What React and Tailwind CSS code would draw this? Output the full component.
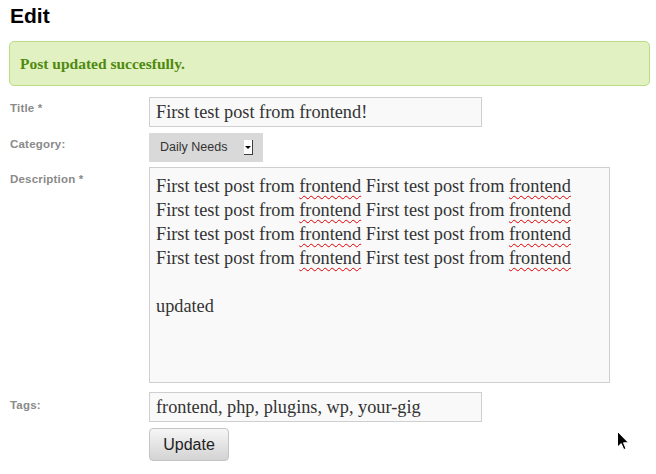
import React from 'react';

const serif = "font-['Liberation_Serif','Times_New_Roman',serif]";

const Misspelled = ({ children }) => (
  <span className="underline decoration-wavy decoration-[#e00000] decoration-1 underline-offset-[3px]">
    {children}
  </span>
);

const Label = ({ children, className = '' }) => (
  <div className={`pl-px text-[11.5px] font-bold leading-[16px] tracking-[0.2px] text-[#8a8a8a] ${className}`}>{children}</div>
);

const Line = () => (
  <div>
    First test post from <Misspelled>frontend</Misspelled> First test post from <Misspelled>frontend</Misspelled>
  </div>
);

const Cursor = () => (
  <svg className="absolute left-[617px] top-[431px]" width="13" height="20" viewBox="0 0 13 20">
    <path d="M0.5 0.5 L0.5 16 L4.2 12.6 L6.8 18.6 L9 17.6 L6.5 11.8 L11.5 11.8 Z" fill="#000" stroke="#fff" strokeWidth="1" />
  </svg>
);

const App = () => {
  return (
    <div className="relative min-h-[474px] bg-white pl-[9px] pr-[6px] font-['Liberation_Sans',Arial,sans-serif]">
      <h1 className="pl-px pt-[4px] text-[21px] font-bold leading-[24px] text-black">Edit</h1>

      <div className="mt-[13px] rounded-[5px] border border-[#b9dd84] bg-[#e1f1c1] px-[10px] pt-[12px] pb-[11px]">
        <p className={`${serif} text-[15.5px] font-bold leading-[20px] text-[#4f8a10]`}>Post updated succesfully.</p>
      </div>

      <div className="mt-[11px] grid grid-cols-[140px_1fr]">
        <Label className="pt-[3px]">Title *</Label>
        <div className={`${serif} h-[30px] w-[333px] border border-[#cfcfcf] bg-[#f9f9f9] pl-[6px] text-[18.3px] leading-[28px] text-[#333]`}>
          First test post from frontend!
        </div>

        <Label className="mt-[6px] pt-[3px]">Category:</Label>
        <div className="mt-[6px] flex h-[29px] w-[114px] items-center bg-[#d9d9d9] pl-[11px] pr-[10px] text-[12.5px] text-[#333]">
          <span>Daily Needs</span>
          <div className="ml-auto flex h-[15px] w-[9px] items-center justify-center border-r border-b border-[#404040] bg-white">
            <div className="h-0 w-0 border-x-[3px] border-t-[3px] border-x-transparent border-t-black" />
          </div>
        </div>

        <Label className="mt-[5px] pt-[4px]">Description *</Label>
        <div className={`${serif} mt-[5px] h-[216px] w-[461px] border border-[#cfcfcf] bg-[#f9f9f9] pl-[6px] pt-[6px] text-[18.3px] leading-[24px] text-[#333]`}>
          <Line />
          <Line />
          <Line />
          <Line />
          <div className="h-[24px]" />
          <div>updated</div>
        </div>

        <Label className="mt-[9px] pt-[5px]">Tags:</Label>
        <div className={`${serif} mt-[9px] h-[30px] w-[333px] border border-[#cfcfcf] bg-[#f9f9f9] pl-[6px] text-[18.3px] leading-[28px] text-[#333]`}>
          frontend, php, plugins, wp, your-gig
        </div>

        <div />
        <div className="mt-[6px]">
          <button className="h-[33px] w-[80px] rounded-[4px] border border-[#c4c4c4] bg-gradient-to-b from-[#f6f6f6] to-[#d3d3d3] text-[16px] text-[#222]">
            Update
          </button>
        </div>
      </div>

      <Cursor />
    </div>
  );
};

export default App;
